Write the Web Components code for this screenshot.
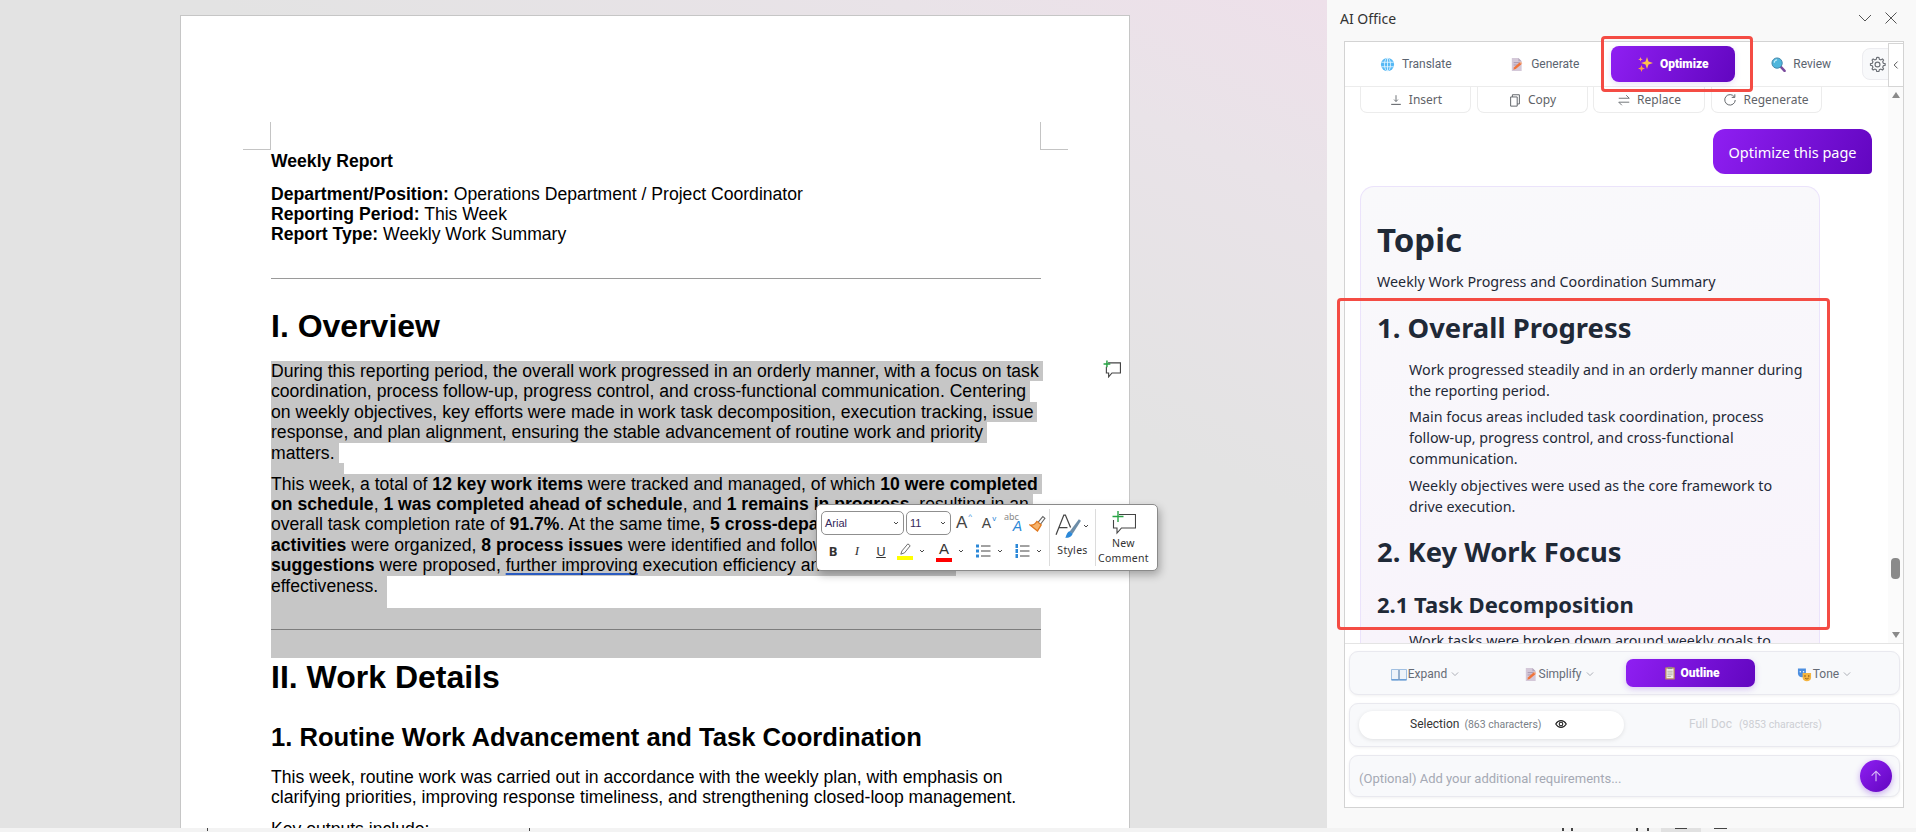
<!DOCTYPE html>
<html lang="en">
<head>
<meta charset="utf-8">
<title>AI Office</title>
<style>
  html, body { margin: 0; padding: 0; height: 100%; overflow: hidden; }
  body { font-family: "Noto Sans", sans-serif; }
</style>
</head>
<body>
<office-app></office-app>

<script>
const ICONS = {
  globe: `<circle cx="8" cy="8" r="7" fill="#55b8f5"/><g fill="none" stroke="#e4f5ff" stroke-width=".9"><ellipse cx="8" cy="8" rx="3.2" ry="7"/><path d="M8 1v14M1.4 5.6h13.2M1.4 10.4h13.2"/></g>`,
  memo: `<path d="M3 1h7l3.5 3.5V15H3z" fill="#d4c8d8"/><path d="M10 1v3.5h3.5z" fill="#b5a6bb"/><path d="M5 6h6M5 8.5h4" stroke="#a896ae" stroke-width="1"/><path d="M4.5 13.5l1-2.6 6-5.2 1.7 1.9-6 5.2z" fill="#f0743a"/><path d="M11.5 5.7l1-.9 1.7 1.9-1 .9z" fill="#f7b08a"/>`,
  sparkle: `<path d="M10 1l1.5 4.5L16 7l-4.5 1.5L10 13 8.500 8.500 4 7l4.500-1.500z" fill="#ffc04d"/><path d="M4.500 9l.9 2.600L8 12.500l-2.600.9-.9 2.600-.9-2.600L1 12.500l2.600-.9z" fill="#ff9c45"/><path d="M3.500 1l.6 1.700 1.700.6-1.700.6-.6 1.700-.6-1.700-1.700-.6 1.700-.6z" fill="#ffb066"/>`,
  lens: `<path d="M10 10l4.500 4.800" stroke="#7a4a9c" stroke-width="2.600" stroke-linecap="round"/><circle cx="6.500" cy="6.500" r="5.500" fill="#4fb6dc" stroke="#3f83a8" stroke-width="1"/><path d="M3.500 6a3 3 0 0 1 3-3" stroke="#c5ecf8" stroke-width="1.200" fill="none"/>`,
  book: `<path d="M.5 3.500h7V14h-7zM8.500 3.500h7V14h-7z" fill="#eef3fa" stroke="#8cb2dc" stroke-width=".8"/><path d="M.5 13h7.500v1.500H.5zM8 13h7.500v1.500H8z" fill="#6d9fd6"/><path d="M8 3.500V14" stroke="#8a9bb0" stroke-width=".8"/>`,
  board: `<rect x="2.500" y="1.500" width="11" height="14" rx="1" fill="#b98a63"/><rect x="4" y="3" width="8" height="11" fill="#f1ece6"/><rect x="5.500" y="1" width="5" height="2.500" fill="#8d8a86"/><path d="M5 6h6M5 8h6M5 10h6M5 12h4" stroke="#a9a39c" stroke-width=".9"/>`,
  masks: `<path d="M1 1.500h8.500v5.500c0 2.500-2 4-4.200 4S1 9.500 1 7z" fill="#4d8fe0"/><circle cx="3.500" cy="5" r=".8" fill="#fff"/><circle cx="7" cy="5" r=".8" fill="#fff"/><path d="M6 6.500h9v5c0 2.300-2 3.800-4.500 3.800S6 13.800 6 11.500z" fill="#f5b53f"/><circle cx="8.500" cy="9.500" r=".8" fill="#7a4a18"/><circle cx="12.500" cy="9.500" r=".8" fill="#7a4a18"/><path d="M8.500 11.800c1.200 1.200 2.800 1.200 4 0" stroke="#7a4a18" stroke-width=".8" fill="none"/>`,
  gear: `<g fill="none" stroke="#6b6f76" stroke-width="1.100"><path d="M8 1.200l1.300.2.5 1.700 1.300.6 1.600-.8 1 1-.8 1.600.6 1.300 1.700.5v1.400l-1.700.5-.6 1.300.8 1.600-1 1-1.600-.8-1.300.6-.5 1.700H7.300l-.5-1.700-1.300-.6-1.600.8-1-1 .8-1.600-.6-1.300-1.700-.5V7.300l1.700-.5.6-1.300-.8-1.600 1-1 1.600.8 1.300-.6.500-1.700z"/><circle cx="8" cy="8" r="2.300"/></g>`,
  insert: `<path d="M8 2.500v7M5.800 7.500L8 9.800l2.200-2.300" fill="none" stroke="#5f6368" stroke-width="1"/><path d="M2.500 13h11" stroke="#5f6368" stroke-width="1.200"/>`,
  copy: `<g fill="none" stroke="#5f6368" stroke-width="1.100"><path d="M5 4.500V2h8v10.500h-2.500"/><path d="M3 4.500h7.500V15H3z"/></g>`,
  replace: `<g fill="none" stroke="#5f6368" stroke-width="1"><path d="M2 6h12L10.500 2.500"/><path d="M14 10.500H2L5.500 14"/></g>`,
  regen: `<path d="M13 4.500A6 6 0 1 0 14 8" fill="none" stroke="#5f6368" stroke-width="1.100"/><path d="M13.500 1.500V5H10" fill="none" stroke="#5f6368" stroke-width="1.100"/>`,
  eye: `<g fill="none" stroke="#222" stroke-width="1.500"><path d="M1 8c2-3.500 4.500-4.500 7-4.500S13 4.500 15 8c-2 3.500-4.500 4.500-7 4.500S3 11.500 1 8z"/><circle cx="8" cy="8" r="2.400"/></g>`,
  arrow: `<path d="M8 14V2.500M3 7.500l5-5 5 5" fill="none" stroke="#d9bdf8" stroke-width="1.300"/>`,
  caret: `<path d="M3 5.500l5 5 5-5" fill="none" stroke="#9a9ea6" stroke-width="1.300"/>`,
  blackcaret: `<path d="M4 6l4 4 4-4" fill="none" stroke="#333" stroke-width="1.800"/>`,
  down: `<path d="M2 5l6 6 6-6" fill="none" stroke="#555" stroke-width="1"/>`,
  close: `<path d="M2.500 2.500l11 11M13.500 2.500l-11 11" fill="none" stroke="#555" stroke-width="1"/>`,
  left: `<path d="M10.500 2.500L5 8l5.500 5.500" fill="none" stroke="#444" stroke-width="1.400"/>`,
  comment: `<path d="M4.500 2.500H15.500V11.500H8L5 15V11.500H3V6" fill="none" stroke="#444" stroke-width="1"/><path d="M3.500.5v6M.5 3.500h6" stroke="#27a344" stroke-width="1.300"/>`,
  pen: `<path d="M3 13l1.200-3.500L10.500 2l2.500 2-6 7.500z" fill="none" stroke="#666" stroke-width="1"/>`,
  brush: `<path d="M8.500 7l4.500-5.500 2 1.700-4.200 5.600z" fill="#fff" stroke="#666" stroke-width="1"/><path d="M7.500 6l4 3.300-3.500 5.700L1 9.500c2.500.4 4.800-.8 6.500-3.500z" fill="#f6b26b" stroke="#e0781e" stroke-width="1.200"/>`,
  bullets: `<g><rect x="1" y="1.500" width="3" height="3" fill="#2b88d8"/><rect x="1" y="6.500" width="3" height="3" fill="#2b88d8"/><rect x="1" y="11.500" width="3" height="3" fill="#2b88d8"/><path d="M6 3h9.500M6 8h9.500M6 13h9.500" stroke="#444" stroke-width="1"/></g>`,
  numbers: `<g><rect x="1.500" y="1" width="2.500" height="4" fill="#2b88d8"/><rect x="1.500" y="6" width="2.500" height="4" fill="#2b88d8"/><rect x="1.500" y="11" width="2.500" height="4" fill="#2b88d8"/><path d="M6 3h9.500M6 8h9.500M6 13h9.500" stroke="#444" stroke-width="1"/></g>`,
  stylepen: `<path d="M1 21L8.500 2h1.500L15 14M4 14h8" fill="none" stroke="#444" stroke-width="1.200"/><path d="M14 18l9-12 2 1.500-8 12.500z" fill="#6d8da8"/><path d="M10 24c3 0 6-1 7-4l-3-2.500c-2 .5-3 3-4 6.500z" fill="#2b88d8"/>`,
  newcomment: `<path d="M7 3.500h16.500V17H9.500L5 22V17H1.500V9" fill="none" stroke="#444" stroke-width="1.100"/><path d="M6 0v11M.5 5.500h11" stroke="#27a344" stroke-width="1.400"/>`
};

class AiIcon extends HTMLElement {
  connectedCallback() {
    const size = this.getAttribute("size") || 16;
    const box = this.getAttribute("box") || "0 0 16 16";
    if (!this.shadowRoot) this.attachShadow({ mode: "open" });
    this.shadowRoot.innerHTML = `
      <style>:host { display: inline-flex; flex: none; width: ${size}px; height: ${size}px; } svg { display: block; width: 100%; height: 100%; }</style>
      <svg viewBox="${box}" xmlns="http://www.w3.org/2000/svg">${ICONS[this.getAttribute("name")] || ""}</svg>`;
  }
}
customElements.define("ai-icon", AiIcon);

class DocPage extends HTMLElement {
  constructor() {
    super();
    this.attachShadow({ mode: "open" });
    this.shadowRoot.innerHTML = `
  <style>
    :host {
      display: block;
      position: relative;
      box-sizing: border-box;
      width: 950px;
      height: 830px;
      background: #fff;
      border: 1px solid #c6c6c6;
      border-bottom: 0;
      padding: 135px 88px 0 90px;
      font: 17.600px/20px "Liberation Sans", Arial, sans-serif;
      color: #000;
    }
    .crop { position: absolute; top: 106px; width: 27px; height: 27px; border-bottom: 1px solid #c4c4c4; }
    .crop.l { left: 62px; border-right: 1px solid #c4c4c4; }
    .crop.r { left: 859px; border-left: 1px solid #c4c4c4; }
    .title { font-weight: bold; height: 20px; }
    .meta { margin-top: 13px; }
    .meta div { height: 20px; white-space: nowrap; }
    hr { margin: 34px 0 0; border: 0; height: 1px; background: #9a9a9a; }
    h1 { margin: 1px 0 0; font-size: 32px; line-height: 36px; font-weight: bold; }
    .ov { margin-top: 29px; }
    .body { margin-top: 17px; }
    .ln { display: block; width: fit-content; height: 20.400px; line-height: 20.400px; white-space: nowrap; background: #c6c6c6; padding-right: 4px; }
    .gap { height: 10.600px; background: #c6c6c6; width: 100%; }
    .gap.short { width: 73px; }
    .sq { text-decoration: underline solid #2a5bc0 2px; text-decoration-skip-ink: none; text-underline-offset: 2px; }
    .rule { height: 50px; background: #c6c6c6; width: 770px; box-sizing: border-box; padding-top: 21px; }
    .rule i { display: block; height: 1px; background: #7d7d7d; }
    .last { height: 32px; padding-right: 9px; }
    h2 { margin: 27px 0 0; font-size: 25.600px; line-height: 30px; font-weight: bold; white-space: nowrap; }
    .plain { margin-top: 15px; line-height: 20.400px; }
    .plain div { white-space: nowrap; height: 20.400px; }
    .next { margin-top: 12px; white-space: nowrap; }
    .note { position: absolute; left: 922px; top: 344px; }
  </style>
  <div class="crop l"></div><div class="crop r"></div>
  <div class="title">Weekly Report</div>
  <div class="meta">
    <div><b>Department/Position:</b> Operations Department / Project Coordinator</div>
    <div><b>Reporting Period:</b> This Week</div>
    <div><b>Report Type:</b> Weekly Work Summary</div>
  </div>
  <hr>
  <h1 class="ov">I. Overview</h1>
  <div class="body">
    <span class="ln">During this reporting period, the overall work progressed in an orderly manner, with a focus on task</span>
    <span class="ln">coordination, process follow-up, progress control, and cross-functional communication. Centering</span>
    <span class="ln">on weekly objectives, key efforts were made in work task decomposition, execution tracking, issue</span>
    <span class="ln">response, and plan alignment, ensuring the stable advancement of routine work and priority</span>
    <span class="ln">matters.</span>
    <div class="gap short"></div>
    <span class="ln">This week, a total of <b>12 key work items</b> were tracked and managed, of which <b>10 were completed</b></span>
    <span class="ln"><b>on schedule</b>, <b>1 was completed ahead of schedule</b>, and <b>1 remains in progress</b>, resulting in an</span>
    <span class="ln">overall task completion rate of <b>91.7%</b>. At the same time, <b>5 cross-departmental</b></span>
    <span class="ln"><b>activities</b> were organized, <b>8 process issues</b> were identified and followed up, and <b>6</b></span>
    <span class="ln" style="padding-right:21px"><b>suggestions</b> were proposed, <span class="sq">further improving</span> execution efficiency and collaboration</span>
    <span class="ln last">effectiveness.</span>
  </div>
  <div class="rule"><i></i></div>
  <h1>II. Work Details</h1>
  <h2>1. Routine Work Advancement and Task Coordination</h2>
  <div class="plain">
    <div>This week, routine work was carried out in accordance with the weekly plan, with emphasis on</div>
    <div>clarifying priorities, improving response timeliness, and strengthening closed-loop management.</div>
  </div>
  <div class="next">Key outputs include:</div>
  <ai-icon class="note" name="comment" size="18"></ai-icon>
`;
  }
}
customElements.define("doc-page", DocPage);

class MiniToolbar extends HTMLElement {
  constructor() {
    super();
    this.attachShadow({ mode: "open" });
    this.shadowRoot.innerHTML = `
  <style>
    :host {
      position: absolute;
      left: 816px;
      top: 504px;
      box-sizing: border-box;
      width: 342px;
      height: 67px;
      display: flex;
      background: #fff;
      border: 1px solid #8a8a8a;
      border-radius: 5px;
      box-shadow: 2px 4px 9px rgba(0,0,0,.28);
      font: 11px "Noto Sans", sans-serif;
      color: #333;
    }
    .main { width: 232px; padding: 6px 0 0 4px; box-sizing: border-box; }
    .row { display: flex; align-items: center; }
    .one { height: 24px; }
    .two { height: 26px; margin-top: 3px; }
    .sel { box-sizing: border-box; height: 24px; border: 1px solid #8f8f8f; border-radius: 5px; display: flex; align-items: center; justify-content: space-between; padding: 0 3px; font-size: 11px; color: #35285a; font-family: "Liberation Sans", sans-serif; }
    .font { width: 83px; }
    .size { width: 45px; margin-left: 2px; }
    .glyph { display: flex; align-items: center; justify-content: center; font-family: "Liberation Sans", sans-serif; position: relative; }
    .up { font-size: 17px; color: #444; width: 16px; margin-left: 5px; }
    .small { font-size: 14px; color: #444; width: 14px; margin-left: 10px; }
    sup { font-size: 8px; color: #2b88d8; margin-left: 1px; line-height: 1; align-self: flex-start; }
    .abc { width: 18px; margin-left: 8px; display: block; line-height: 1; font-size: 9px; color: #888; }
    .abc b { display: block; font: italic 14px "Liberation Sans", sans-serif; color: #2b88d8; text-align: right; margin-top: -3px; }
    .brush { margin-left: 7px; }
    .btn { width: 24px; height: 24px; display: flex; flex-direction: column; align-items: center; justify-content: center; font: 13px "Liberation Serif", serif; }
    .btn.b { font: bold 13px "Noto Sans", sans-serif; }
    .btn.i { font-style: italic; }
    .btn.u { text-decoration: underline; font-family: "Noto Sans", sans-serif; }
    .swatch { width: 16px; height: 4px; margin-top: -1px; }
    .caret { width: 10px; display: flex; justify-content: center; }
    .lead { margin-left: 5px; }
    .sep { width: 1px; background: #dcdcdc; margin: 4px 0; }
    .styles { width: 45px; display: flex; flex-direction: column; align-items: center; padding-top: 7px; box-sizing: border-box; font-size: 10.500px; letter-spacing: .3px; }
    .sh { display: flex; align-items: center; height: 28px; }
    .cm { flex: 1; display: flex; flex-direction: column; align-items: center; padding: 6px 6px 0 0; font-size: 10.500px; line-height: 15px; letter-spacing: .3px; }
    .cm ai-icon { margin-bottom: 1px; }
    .stxt { margin-top: 3px; }
  </style>
  <div class="main">
    <div class="row one">
      <div class="sel font">Arial <ai-icon name="blackcaret" size="8"></ai-icon></div>
      <div class="sel size">11 <ai-icon name="blackcaret" size="8"></ai-icon></div>
      <div class="glyph up">A<sup>^</sup></div>
      <div class="glyph small">A<sup>v</sup></div>
      <div class="abc">abc<b>A</b></div>
      <ai-icon class="brush" name="brush" size="17"></ai-icon>
    </div>
    <div class="row two">
      <div class="btn b">B</div>
      <div class="btn i">I</div>
      <div class="btn u">U</div>
      <div class="btn"><ai-icon name="pen" size="15"></ai-icon><div class="swatch" style="background:#ffff00"></div></div>
      <div class="caret"><ai-icon name="blackcaret" size="8"></ai-icon></div>
      <div class="btn lead" style="font:15px 'Liberation Sans',sans-serif;line-height:16px">A<div class="swatch" style="background:#f00;margin-top:1px"></div></div>
      <div class="caret"><ai-icon name="blackcaret" size="8"></ai-icon></div>
      <div class="btn lead"><ai-icon name="bullets" size="16"></ai-icon></div>
      <div class="caret"><ai-icon name="blackcaret" size="8"></ai-icon></div>
      <div class="btn lead"><ai-icon name="numbers" size="16"></ai-icon></div>
      <div class="caret"><ai-icon name="blackcaret" size="8"></ai-icon></div>
    </div>
  </div>
  <div class="sep"></div>
  <div class="styles">
    <div class="sh"><ai-icon name="stylepen" size="27" box="0 0 26 26"></ai-icon><ai-icon name="blackcaret" size="8"></ai-icon></div>
    <div class="stxt">Styles</div>
  </div>
  <div class="sep"></div>
  <div class="cm">
    <ai-icon name="newcomment" size="24" box="0 0 24 24"></ai-icon>
    <div>New</div>
    <div>Comment</div>
  </div>
`;
  }
}
customElements.define("mini-toolbar", MiniToolbar);

class PaneTabs extends HTMLElement {
  constructor() {
    super();
    this.attachShadow({ mode: "open" });
    const tabs = [["globe", "Translate", 15], ["memo", "Generate", 15], ["sparkle", "Optimize", 16, true], ["lens", "Review", 15]];
    this.shadowRoot.innerHTML = `
  <style>
    :host { display: flex; align-items: center; gap: 5px; height: 45px; padding-left: 9px; box-sizing: border-box; background: #fff; border-bottom: 1px solid #ececec; position: relative; font: 12px Roboto, sans-serif; color: #5b6470; }
    .tab { width: 123.500px; height: 36px; display: flex; align-items: center; justify-content: center; gap: 7px; border-radius: 8px; }
    .tab.on { background: linear-gradient(115deg, #8f1ff2, #6206c0); color: #fff; font-weight: 900; box-shadow: 0 2px 6px rgba(120,40,220,.15); }
    .gear { box-sizing: border-box; width: 36px; height: 32px; margin-left: -6px; display: flex; align-items: center; padding-left: 6px; border: 1px solid #ececf0; border-radius: 8px; background: #f8f9fb; }
    .fold { position: absolute; right: 0; top: 1px; width: 15px; height: 44px; box-sizing: border-box; background: #fff; border: 1px solid #d5d5d5; border-right: 0; display: flex; align-items: center; justify-content: center; }
  </style>
  ${tabs.map(([icon, label, size, on]) => `<div class="tab${on ? " on" : ""}"><ai-icon name="${icon}" size="${size}"></ai-icon>${label}</div>`).join("")}
  <div class="gear"><ai-icon name="gear" size="17"></ai-icon></div>
  <div class="fold"><ai-icon name="left" size="10"></ai-icon></div>
`;
  }
}
customElements.define("pane-tabs", PaneTabs);

class ResultCard extends HTMLElement {
  constructor() {
    super();
    this.attachShadow({ mode: "open" });
    this.shadowRoot.innerHTML = `
  <style>
    :host { display: block; box-sizing: border-box; width: 460px; margin-top: 12px; padding: 33px 16px 0 16px; background: linear-gradient(170deg, #f9f9fb, #f8f3fb); border: 1px solid #ebe3fb; border-bottom: 0; border-radius: 14px 14px 0 0; color: #1f2937; font: 14.300px/21px "Noto Sans", sans-serif; }
    h1 { margin: 0; font-size: 33px; line-height: 40px; font-weight: 700; }
    .sub { margin-top: 11px; white-space: nowrap; }
    h2 { margin: 18.600px 0 0; font-size: 27.400px; line-height: 34px; font-weight: 700; }
    h3 { margin: 21px 0 0; font-size: 22px; line-height: 28px; font-weight: 700; }
    ul { list-style: none; margin: 14.400px 0 0; padding: 0 0 0 32px; }
    li + li { margin-top: 5.500px; }
    .h2b { margin-top: 18.100px; }
    .ul3 { margin-top: 12.400px; }
  </style>
  <h1>Topic</h1>
  <div class="sub">Weekly Work Progress and Coordination Summary</div>
  <h2>1. Overall Progress</h2>
  <ul>
    <li>Work progressed steadily and in an orderly manner during the reporting period.</li>
    <li>Main focus areas included task coordination, process follow-up, progress control, and cross-functional communication.</li>
    <li>Weekly objectives were used as the core framework to drive execution.</li>
  </ul>
  <h2 class="h2b">2. Key Work Focus</h2>
  <h3>2.1 Task Decomposition</h3>
  <ul class="ul3"><li>Work tasks were broken down around weekly goals to</li></ul>
`;
  }
}
customElements.define("result-card", ResultCard);

class PaneChat extends HTMLElement {
  constructor() {
    super();
    this.attachShadow({ mode: "open" });
    const actions = [["insert", "Insert", 111], ["copy", "Copy", 111], ["replace", "Replace", 112], ["regen", "Regenerate", 111]];
    this.shadowRoot.innerHTML = `
  <style>
    :host { display: flex; height: 556px; background: #fff; border-bottom: 1px solid #e4e4e4; box-sizing: content-box; overflow: hidden; font: 12px "Noto Sans", sans-serif; }
    .flow { width: 543px; box-sizing: border-box; padding-left: 15px; overflow: hidden; }
    .acts { display: flex; gap: 5.500px; }
    .act { box-sizing: border-box; height: 26px; display: flex; align-items: center; justify-content: center; gap: 6px; border: 1px solid #ececec; border-top: 0; border-radius: 0 0 7px 7px; color: #5f6368; font-size: 12px; }
    .ask { margin: 16px 0 0 353px; width: 159px; height: 45px; display: flex; align-items: center; justify-content: center; border-radius: 12px 12px 4px 12px; background: linear-gradient(115deg, #8f1ff2, #6206c0); color: #fff; font-size: 14.500px; }
    .bar { width: 15px; background: #fbfbfb; box-sizing: border-box; padding: 5px 3px 5px 3px; display: flex; flex-direction: column; align-items: center; }
    .up, .dn { width: 0; height: 0; border: 4.500px solid transparent; }
    .up { border-bottom: 6px solid #8a8a8a; border-top: 0; }
    .dn { border-top: 6px solid #8a8a8a; border-bottom: 0; margin-top: auto; }
    .thumb { width: 9px; height: 21px; border-radius: 4px; background: #8a8a8a; margin-top: 460px; }
  </style>
  <div class="flow">
    <div class="acts">
      ${actions.map(([i, t, w]) => `<div class="act" style="width:${w}px"><ai-icon name="${i}" size="14"></ai-icon>${t}</div>`).join("")}
    </div>
    <div class="ask">Optimize this page</div>
    <result-card></result-card>
  </div>
  <div class="bar"><div class="up"></div><div class="thumb"></div><div class="dn"></div></div>
`;
  }
}
customElements.define("pane-chat", PaneChat);

class CtlCard extends HTMLElement {
  constructor() {
    super();
    this.attachShadow({ mode: "open" });
    this.shadowRoot.innerHTML = `
  <style>
    :host { display: block; box-sizing: border-box; background: #f8f9fb; border: 1px solid #e9e9ef; border-radius: 9px; box-shadow: 0 1px 3px rgba(0,0,0,.06); }
    div { display: flex; align-items: center; height: 100%; box-sizing: border-box; }
  </style>
  <div><slot></slot></div>
`;
  }
}
customElements.define("ctl-card", CtlCard);

class PaneControls extends HTMLElement {
  constructor() {
    super();
    this.attachShadow({ mode: "open" });
    this.shadowRoot.innerHTML = `
  <style>
    :host { display: flex; flex-direction: column; gap: 8px; padding: 7px 3px 0 4px; font: 12px Roboto, sans-serif; color: #666c76; }
    .r1 { height: 44px; }
    .r2 { height: 44px; }
    .r3 { height: 42px; }
    .opt { width: 135px; display: flex; align-items: center; justify-content: center; gap: 1px; height: 28px; white-space: nowrap; position: relative; top: 1px; }
    .opt ai-icon:last-child { margin-left: 2px; }
    .on { box-sizing: border-box; width: 129px; margin: 0 0 0 0; gap: 3px; border-radius: 7px; background: linear-gradient(115deg, #8f1ff2, #6206c0); color: #fff; font-weight: 900; box-shadow: 0 2px 6px rgba(120,40,220,.25); top: 0; }
    .seg { width: 265px; height: 28px; margin-left: 9px; border-radius: 14px; background: #fff; box-shadow: 0 1px 4px rgba(0,0,0,.1); display: flex; align-items: center; padding: 0 0 2px 51px; box-sizing: border-box; color: #333; }
    .seg small, .off small { font-size: 10.500px; color: #7a7f88; margin-left: 5px; }
    .seg ai-icon { margin-left: 14px; }
    .off { margin-left: 65px; color: #cdcfd4; white-space: nowrap; padding-bottom: 2px; }
    .off small { color: #cdcfd4; margin-left: 4px; }
    .ph { margin-left: 9px; color: #a5a9b4; font-size: 13px; padding-top: 5px; }
    .send { margin-left: auto; margin-right: 7px; margin-top: -1px; width: 32px; height: 32px; border-radius: 50%; background: linear-gradient(135deg, #8f1ff2, #6206c0); box-shadow: 0 2px 6px rgba(120,40,220,.4); display: flex; align-items: center; justify-content: center; }
  </style>
  <ctl-card class="r1">
    <span class="opt" style="margin-left:8px"><ai-icon name="book" size="16"></ai-icon>Expand<ai-icon name="caret" size="10"></ai-icon></span>
    <span class="opt" style="margin-left:-2px"><ai-icon name="memo" size="15"></ai-icon>Simplify<ai-icon name="caret" size="10"></ai-icon></span>
    <span class="opt on"><ai-icon name="board" size="14"></ai-icon>Outline</span>
    <span class="opt" style="margin-left:2px"><ai-icon name="masks" size="15"></ai-icon>Tone<ai-icon name="caret" size="10"></ai-icon></span>
  </ctl-card>
  <ctl-card class="r2">
    <span class="seg">Selection <small>(863 characters)</small><ai-icon name="eye" size="12"></ai-icon></span>
    <span class="off">Full Doc <small>(9853 characters)</small></span>
  </ctl-card>
  <ctl-card class="r3">
    <span class="ph">(Optional) Add your additional requirements...</span>
    <span class="send"><ai-icon name="arrow" size="14"></ai-icon></span>
  </ctl-card>
`;
  }
}
customElements.define("pane-controls", PaneControls);

class TaskPane extends HTMLElement {
  constructor() {
    super();
    this.attachShadow({ mode: "open" });
    this.shadowRoot.innerHTML = `
  <style>
    :host { display: block; position: relative; background: #f9f9f9; box-sizing: border-box; padding-left: 17px; overflow: hidden; }
    header { height: 41px; display: flex; align-items: center; margin-left: -4px; padding: 0 17px 5px 0; box-sizing: border-box; font: 14px "Noto Sans", sans-serif; color: #333; justify-content: space-between; }
    header span { display: flex; gap: 10px; }
    .box { box-sizing: border-box; width: 560px; height: 767px; border: 1px solid #d3d3d3; background: #fff; overflow: hidden; }
    .lower { background: #fff; height: 163px; }
    .mark { position: absolute; box-sizing: border-box; border: 3px solid #f44c44; border-radius: 4px; pointer-events: none; }
  </style>
  <header>AI Office<span><ai-icon name="down" size="16"></ai-icon><ai-icon name="close" size="16"></ai-icon></span></header>
  <div class="box">
    <pane-tabs></pane-tabs>
    <pane-chat></pane-chat>
    <div class="lower"><pane-controls></pane-controls></div>
  </div>
  <div class="mark" style="left:274px;top:36px;width:152px;height:56px"></div>
  <div class="mark" style="left:10px;top:298px;width:493px;height:332px"></div>
`;
  }
}
customElements.define("task-pane", TaskPane);

class StatusBar extends HTMLElement {
  constructor() {
    super();
    this.attachShadow({ mode: "open" });
    const bits = [[207, 1], [529, 1], [1562, 2], [1571, 2], [1636, 2], [1647, 2]];
    let x = 0;
    const html = bits.map(([at, w]) => {
      const s = `<i style="margin-left:${at - x}px;width:${w}px"></i>`;
      x = at + w;
      return s;
    }).join("");
    this.shadowRoot.innerHTML = `
  <style>
    :host { display: flex; height: 4px; background: #f3f3f3; align-items: flex-start; }
    i { display: block; height: 3px; background: #444; flex: none; }
    .hi { margin-left: 12px; width: 40px; height: 4px; background: #e1e1e1; display: flex; justify-content: center; flex: none; }
    .hi i { width: 12px; height: 1px; }
    .tail { margin-left: 13px; width: 13px; height: 1px; }
  </style>
  ${html}<div class="hi"><i></i></div><i class="tail"></i>
`;
  }
}
customElements.define("status-bar", StatusBar);

class OfficeApp extends HTMLElement {
  constructor() {
    super();
    this.attachShadow({ mode: "open" });
    this.shadowRoot.innerHTML = `
  <style>
    :host { display: grid; grid-template-columns: 1327px 589px; grid-template-rows: 828px 4px; width: 1916px; height: 832px; overflow: hidden; }
    .canvas { position: relative; overflow: hidden; padding: 15px 0 0 180px; box-sizing: border-box; background: linear-gradient(205deg, #eee0ea 0%, #e9e3e8 14%, #e3e3e3 36%); }
    status-bar { grid-column: 1 / 3; }
  </style>
  <div class="canvas">
    <doc-page></doc-page>
    <mini-toolbar></mini-toolbar>
  </div>
  <task-pane></task-pane>
  <status-bar></status-bar>
`;
  }
}
customElements.define("office-app", OfficeApp);
</script>
</body>
</html>
